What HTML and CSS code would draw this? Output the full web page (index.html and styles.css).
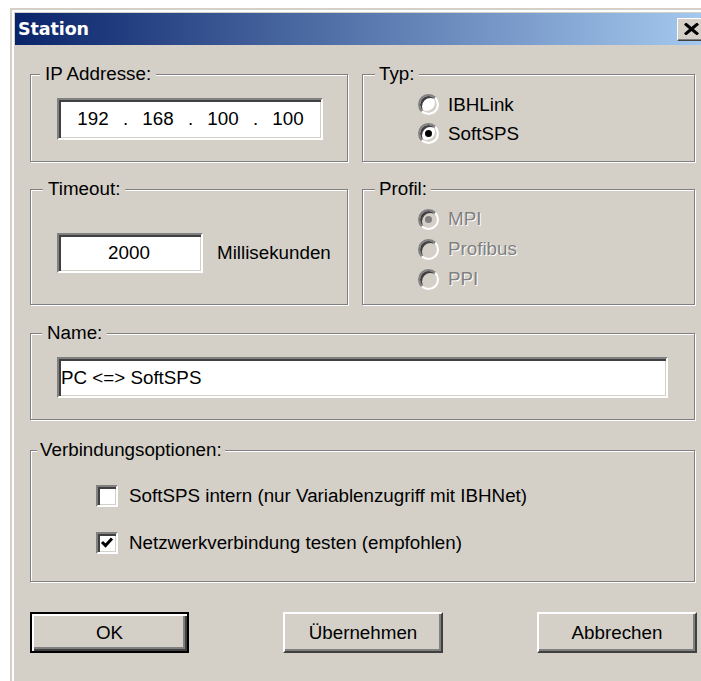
FILE: index.html
```html
<!DOCTYPE html>
<html lang="de">
<head>
<meta charset="utf-8">
<title>Station</title>
<link rel="stylesheet" href="styles.css">
</head>
<body>
<div class="window">
  <div class="titlebar">
    <span class="title">Station</span>
    <button class="close" type="button" aria-label="Schließen">
      <svg width="15" height="12" viewBox="0 0 15 12"><path d="M1 0.5 L14 11.5 M14 0.5 L1 11.5" stroke="#000" stroke-width="3" fill="none"/></svg>
    </button>
  </div>

  <div class="client">
    <div class="row row-1">
      <fieldset class="group group-left">
        <legend class="legend legend-ip">IP Addresse:</legend>
        <div class="group-body body-ip">
          <div class="edit ip-edit">
            <span class="ip-field">192</span><span class="ip-dot">.</span>
            <span class="ip-field">168</span><span class="ip-dot">.</span>
            <span class="ip-field">100</span><span class="ip-dot">.</span>
            <span class="ip-field">100</span>
          </div>
        </div>
      </fieldset>
      <fieldset class="group group-right">
        <legend class="legend legend-right">Typ:</legend>
        <div class="group-body body-typ">
          <div class="option"><span class="radio"></span><span>IBHLink</span></div>
          <div class="option"><span class="radio checked"></span><span>SoftSPS</span></div>
        </div>
      </fieldset>
    </div>

    <div class="row row-2">
      <fieldset class="group group-left">
        <legend class="legend legend-timeout">Timeout:</legend>
        <div class="group-body body-timeout">
          <div class="edit timeout-edit">2000</div>
          <span class="unit">Millisekunden</span>
        </div>
      </fieldset>
      <fieldset class="group group-right">
        <legend class="legend legend-right">Profil:</legend>
        <div class="group-body body-profil">
          <div class="option disabled"><span class="radio checked"></span><span class="dis-text">MPI</span></div>
          <div class="option disabled"><span class="radio"></span><span class="dis-text">Profibus</span></div>
          <div class="option disabled"><span class="radio"></span><span class="dis-text">PPI</span></div>
        </div>
      </fieldset>
    </div>

    <fieldset class="group group-wide group-name">
      <legend class="legend legend-name">Name:</legend>
      <div class="group-body body-name">
        <div class="edit name-edit">PC &lt;=&gt; SoftSPS</div>
      </div>
    </fieldset>

    <fieldset class="group group-wide group-options">
      <legend class="legend legend-options">Verbindungsoptionen:</legend>
      <div class="group-body body-options">
        <div class="check-row"><span class="checkbox"></span><span>SoftSPS intern (nur Variablenzugriff mit IBHNet)</span></div>
        <div class="check-row"><span class="checkbox"><svg width="18" height="18" viewBox="0 0 18 18"><path d="M4 8 L7.5 11.5 L14 4.5" stroke="#000" stroke-width="3" fill="none"/></svg></span><span>Netzwerkverbindung testen (empfohlen)</span></div>
      </div>
    </fieldset>

    <div class="buttons">
      <button class="btn btn-default" type="button">OK</button>
      <button class="btn" type="button">Übernehmen</button>
      <button class="btn" type="button">Abbrechen</button>
    </div>
  </div>
</div>
</body>
</html>
```

FILE: styles.css
```css
html, body {
  margin: 0;
  padding: 0;
  overflow: hidden;
  background: #ffffff;
}

body {
  font-family: "Liberation Sans", Arial, sans-serif;
  font-size: 18.8px;
  color: #000;
}

/* window frame */
.window {
  margin: 8px 0 0 10px;
  width: 704px;
  height: 700px;
  box-sizing: border-box;
  background: #d4d0c8;
  border-top: 2px solid #d4d0c8;
  border-left: 2px solid #d4d0c8;
  padding: 3px 0 0 3px;
  box-shadow: inset 2px 2px 0 #ffffff;
}

.titlebar {
  height: 32px;
  width: 694px;
  display: flex;
  align-items: center;
  justify-content: space-between;
  padding: 0 4px 0 3px;
  box-sizing: border-box;
  background: linear-gradient(to right, #0a246a, #a6caf0);
}

.title {
  font-family: "DejaVu Sans", Verdana, sans-serif;
  font-weight: bold;
  font-size: 17.5px;
  color: #ffffff;
  letter-spacing: -0.1px;
}

.close {
  width: 28px;
  height: 23px;
  margin: 0;
  padding: 0;
  display: flex;
  align-items: center;
  justify-content: center;
  background: #d4d0c8;
  border: 1px solid;
  border-color: #ffffff #404040 #404040 #ffffff;
  box-shadow: inset -1px -1px 0 #808080;
}

/* dialog client area */
.client {
  padding: 19px 0 0 15px;
  width: 667px;
}

.row {
  display: grid;
  grid-template-columns: 318px 333px;
  column-gap: 14px;
}

.row-2 {
  margin-top: 17px;
}

.group {
  margin: 0;
  padding: 0;
  min-width: 0;
  border: 1px solid #808080;
  box-shadow: 1px 1px 0 #ffffff, inset 1px 1px 0 #ffffff;
}

.group-wide {
  width: 665px;
  box-sizing: border-box;
}

.group-name {
  margin-top: 18px;
}

.group-options {
  margin-top: 20px;
}

.legend {
  background: #d4d0c8;
  line-height: 20px;
  height: 20px;
  padding: 0 5px;
  margin-left: 9px;
}

.legend-timeout { margin-left: 12px; }
.legend-name { margin-left: 11px; }
.legend-options { margin-left: 6px; padding: 0 3px; }
.legend-right { margin-left: 12px; padding: 0 4px; }

.group-body {
  box-sizing: border-box;
}

.body-ip {
  height: 77px;
  padding: 14px 0 0 26px;
}

.body-typ {
  height: 77px;
  padding: 6px 0 0 55px;
}

.body-timeout {
  height: 105px;
  padding: 34px 0 0 26px;
  display: flex;
  align-items: flex-start;
}

.body-profil {
  height: 105px;
  padding: 5px 0 0 55px;
}

.body-name {
  height: 76px;
  padding: 14px 0 0 26px;
}

.body-options {
  height: 121px;
  padding: 24px 0 0 65px;
  display: flex;
  flex-direction: column;
  gap: 23px;
}

/* sunken edit fields */
.edit {
  box-sizing: border-box;
  background: #ffffff;
  border: 2px solid;
  border-color: #808080 #ffffff #ffffff #808080;
  box-shadow: inset 2px 2px 0 #404040, inset -1px -1px 0 #d4d0c8;
  display: flex;
  align-items: center;
}

.ip-edit {
  width: 266px;
  height: 42px;
  padding-left: 4px;
}

.ip-field {
  width: 60px;
  text-align: center;
}

.ip-dot {
  width: 5px;
  text-align: center;
}

.timeout-edit {
  width: 146px;
  height: 40px;
  justify-content: center;
  padding-right: 2px;
}

.unit {
  margin-left: 14px;
  line-height: 40px;
}

.name-edit {
  width: 611px;
  height: 41px;
  padding-left: 2px;
}

/* radio buttons */
.option {
  height: 29px;
  display: flex;
  align-items: center;
  gap: 9px;
}

.body-profil .option {
  height: 30px;
}

.radio {
  position: relative;
  width: 21px;
  height: 21px;
  box-sizing: border-box;
  border-radius: 50%;
  border: 2px solid;
  border-color: #808080 #ffffff #ffffff #808080;
  background: #ffffff;
  box-shadow: inset 2px 2px 0 #404040, inset -2px -2px 0 #d4d0c8;
  flex: none;
}

.radio.checked::after {
  content: "";
  position: absolute;
  left: 5px;
  top: 5px;
  width: 7px;
  height: 7px;
  border-radius: 50%;
  background: #000;
}

.disabled .radio {
  background: #d4d0c8;
}

.disabled .radio.checked::after {
  background: #808080;
}

.dis-text {
  color: #808080;
  text-shadow: 1px 1px 0 #ffffff;
}

/* check boxes */
.check-row {
  height: 24px;
  display: flex;
  align-items: center;
  gap: 11px;
}

.checkbox {
  width: 22px;
  height: 22px;
  box-sizing: border-box;
  background: #ffffff;
  border: 2px solid;
  border-color: #808080 #ffffff #ffffff #808080;
  box-shadow: inset 2px 2px 0 #404040, inset -1px -1px 0 #d4d0c8;
  display: flex;
  align-items: center;
  justify-content: center;
  flex: none;
}

/* push buttons */
.buttons {
  margin-top: 30px;
  width: 667px;
  display: flex;
  justify-content: space-between;
}

.btn {
  width: 160px;
  height: 41px;
  margin: 0;
  padding: 0;
  font-family: "Liberation Sans", Arial, sans-serif;
  font-size: 18.8px;
  color: #000;
  background: #d4d0c8;
  border: 2px solid;
  border-color: #ffffff #404040 #404040 #ffffff;
  box-shadow: inset -2px -2px 0 #808080;
}

.btn-default {
  width: 159px;
  border: 2px solid #000000;
  box-shadow: inset 2px 2px 0 #ffffff, inset -2px -2px 0 #404040, inset -4px -4px 0 #808080;
}
```
